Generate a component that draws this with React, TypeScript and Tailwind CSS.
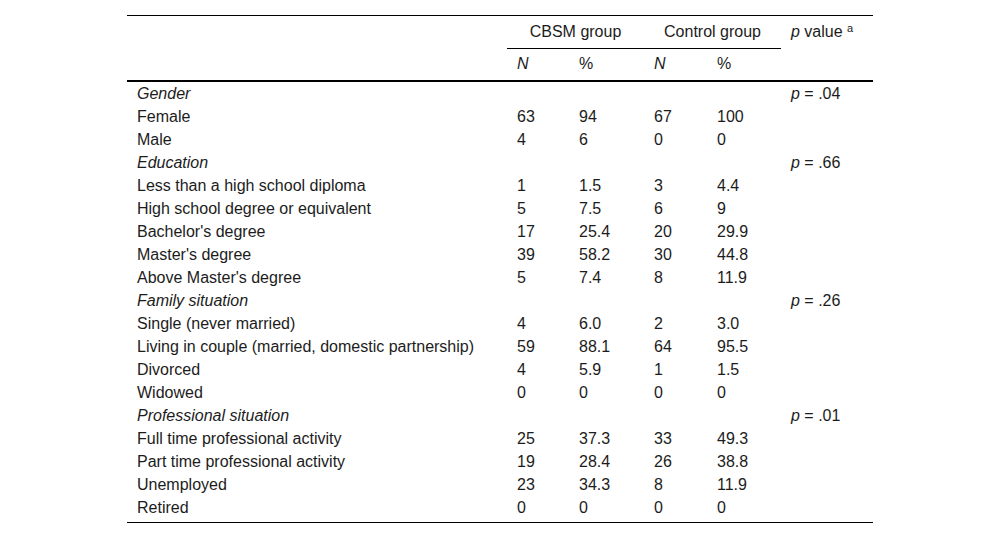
const rows: { label: string; italic?: boolean; n1?: string; p1?: string; n2?: string; p2?: string; pv?: string }[] = [
  { label: 'Gender', italic: true, pv: '.04' },
  { label: 'Female', n1: '63', p1: '94', n2: '67', p2: '100' },
  { label: 'Male', n1: '4', p1: '6', n2: '0', p2: '0' },
  { label: 'Education', italic: true, pv: '.66' },
  { label: 'Less than a high school diploma', n1: '1', p1: '1.5', n2: '3', p2: '4.4' },
  { label: 'High school degree or equivalent', n1: '5', p1: '7.5', n2: '6', p2: '9' },
  { label: "Bachelor's degree", n1: '17', p1: '25.4', n2: '20', p2: '29.9' },
  { label: "Master's degree", n1: '39', p1: '58.2', n2: '30', p2: '44.8' },
  { label: "Above Master's degree", n1: '5', p1: '7.4', n2: '8', p2: '11.9' },
  { label: 'Family situation', italic: true, pv: '.26' },
  { label: 'Single (never married)', n1: '4', p1: '6.0', n2: '2', p2: '3.0' },
  { label: 'Living in couple (married, domestic partnership)', n1: '59', p1: '88.1', n2: '64', p2: '95.5' },
  { label: 'Divorced', n1: '4', p1: '5.9', n2: '1', p2: '1.5' },
  { label: 'Widowed', n1: '0', p1: '0', n2: '0', p2: '0' },
  { label: 'Professional situation', italic: true, pv: '.01' },
  { label: 'Full time professional activity', n1: '25', p1: '37.3', n2: '33', p2: '49.3' },
  { label: 'Part time professional activity', n1: '19', p1: '28.4', n2: '26', p2: '38.8' },
  { label: 'Unemployed', n1: '23', p1: '34.3', n2: '8', p2: '11.9' },
  { label: 'Retired', n1: '0', p1: '0', n2: '0', p2: '0' },
];

export default function App() {
  return (
    <div className="w-[1000px] h-[540px] bg-white pt-[15px] font-['Liberation_Sans',Arial,sans-serif] text-[16px] leading-[18px] text-[#1c1c1c]">
      <table className="ml-[127px] w-[746px] border-collapse table-fixed">
        <colgroup>
          <col className="w-[380px]" />
          <col className="w-[62px]" />
          <col className="w-[75px]" />
          <col className="w-[63px]" />
          <col className="w-[74px]" />
          <col className="w-[92px]" />
        </colgroup>
        <thead>
          <tr className="border-t border-black h-[33px]">
            <th className="p-0" />
            <th colSpan={2} className="p-0 font-normal text-center border-b border-black align-middle">CBSM group</th>
            <th colSpan={2} className="p-0 font-normal text-center border-b border-black align-middle">Control group</th>
            <th rowSpan={2} className="px-[10px] pt-[7px] font-normal text-left align-top whitespace-nowrap">
              <i>p</i> value <span className="text-[11px] relative -top-[5px]">a</span>
            </th>
          </tr>
          <tr className="h-[32px] border-b-2 border-black">
            <th className="p-0" />
            <th className="px-[10px] font-normal italic text-left">N</th>
            <th className="px-[10px] font-normal text-left">%</th>
            <th className="px-[10px] font-normal italic text-left">N</th>
            <th className="px-[10px] font-normal text-left">%</th>
          </tr>
        </thead>
        <tbody>
          {rows.map((r, i) => (
            <tr key={i} className="h-[23px]">
              <td className={`px-[10px] pt-[3px] pb-0 whitespace-nowrap ${r.italic ? 'italic' : ''}`}>{r.label}</td>
              <td className="px-[10px] pt-[3px] pb-0">{r.n1}</td>
              <td className="px-[10px] pt-[3px] pb-0">{r.p1}</td>
              <td className="px-[10px] pt-[3px] pb-0">{r.n2}</td>
              <td className="px-[10px] pt-[3px] pb-0">{r.p2}</td>
              <td className="px-[10px] pt-[3px] pb-0 whitespace-nowrap">{r.pv && <><i>p</i> = {r.pv}</>}</td>
            </tr>
          ))}
          <tr className="h-[5px] border-b border-black">
            <td colSpan={6} className="p-0" />
          </tr>
        </tbody>
      </table>
    </div>
  );
}
